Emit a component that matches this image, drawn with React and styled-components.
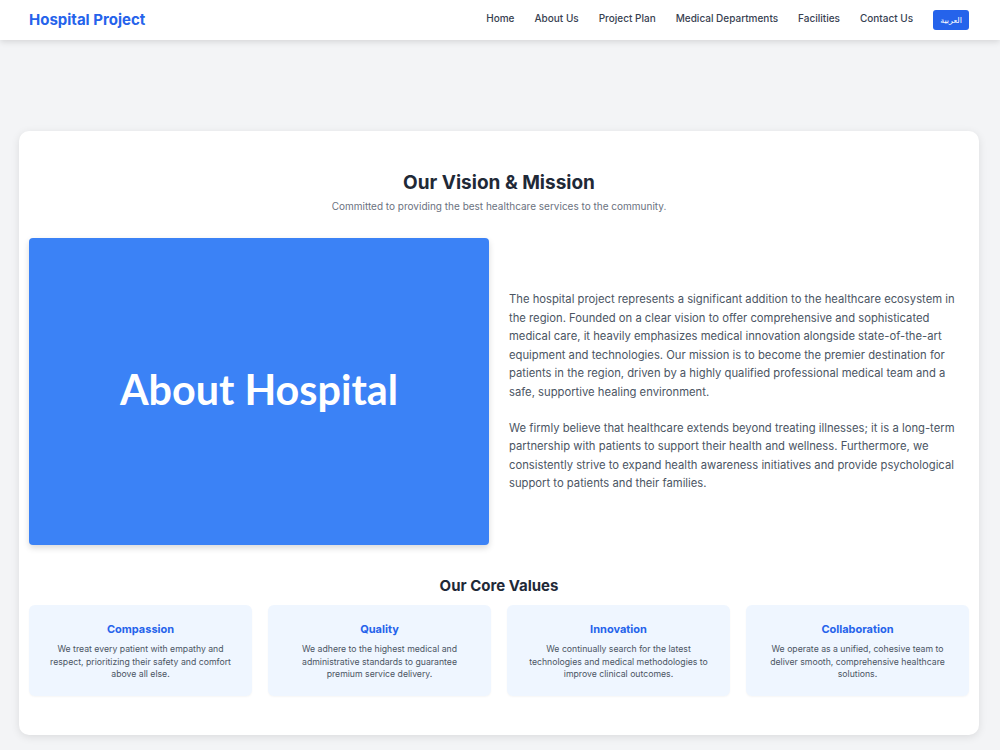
import styled, { createGlobalStyle } from "styled-components";

const GlobalStyle = createGlobalStyle`
  * { box-sizing: border-box; }
  body {
    margin: 0;
    background: #f3f4f6;
    font-family: Inter, "Noto Sans", sans-serif;
    color: #1f2937;
  }
`;

const Header = styled.header`
  height: 40px;
  background: #fff;
  box-shadow: 0 2px 6px rgba(0, 0, 0, 0.12);
  display: flex;
  align-items: center;
  justify-content: space-between;
  padding: 0 31px 0 29px;
`;

const Logo = styled.div`
  font-size: 15px;
  font-weight: 700;
  color: #2563eb;
  margin-top: -2px;
`;

const Nav = styled.nav`
  display: flex;
  align-items: center;
  gap: 20px;
`;

const NavLink = styled.a`
  font-size: 10px;
  font-weight: 500;
  color: #374151;
  text-decoration: none;
  margin-top: -4px;
`;

const LangButton = styled.button`
  background: #2563eb;
  color: #fff;
  border: none;
  border-radius: 3px;
  height: 20px;
  padding: 0 7px;
  font-size: 8px;
  font-family: "Noto Sans", "DejaVu Sans", sans-serif;
  margin-top: -1px;
`;

const Main = styled.main`
  padding: 91px 21px 15px 19px;
`;

const Card = styled.section`
  background: #fff;
  border-radius: 10px;
  box-shadow: 0 2px 8px rgba(0, 0, 0, 0.1);
  padding: 40px 10px 39px;
`;

const Heading = styled.h2`
  margin: 0;
  text-align: center;
  font-size: 19px;
  font-weight: 700;
  color: #1f2937;
`;

const Subtitle = styled.p`
  margin: 6px 0 0;
  text-align: center;
  font-size: 10px;
  color: #6b7280;
`;

const Intro = styled.div`
  display: grid;
  grid-template-columns: 460px 1fr;
  gap: 20px;
  margin-top: 26px;
  align-items: center;
`;

const Banner = styled.div`
  height: 307px;
  background: #3b82f6;
  border-radius: 4px;
  box-shadow: 0 3px 6px rgba(0, 0, 0, 0.15);
  display: flex;
  align-items: center;
  justify-content: center;
  padding-bottom: 6px;
  color: #fff;
  font-family: Lato, sans-serif;
  font-weight: 700;
  font-size: 41.3px;
`;

const TextBlock = styled.div`
  font-size: 11.25px;
  line-height: 18.4px;
  color: #4b5563;
  padding-right: 4px;
`;

const Para = styled.p`
  margin: 0 0 18px;
  &:last-child { margin-bottom: 0; }
`;

const ValuesTitle = styled.h3`
  margin: 31px 0 0;
  text-align: center;
  font-size: 15px;
  font-weight: 700;
  color: #1f2937;
`;

const ValuesGrid = styled.div`
  display: grid;
  grid-template-columns: repeat(4, 1fr);
  gap: 16px;
  margin-top: 10px;
`;

const ValueCard = styled.div`
  background: #eff6ff;
  border-radius: 6px;
  height: 91px;
  padding: 17px 16px 0;
  text-align: center;
  box-shadow: 0 1px 2px rgba(0, 0, 0, 0.04);
`;

const ValueName = styled.div`
  font-size: 11px;
  font-weight: 700;
  color: #2563eb;
`;

const ValueText = styled.p`
  margin: 7px 0 0;
  font-size: 8.7px;
  line-height: 12.5px;
  color: #4b5563;
`;

const links = ["Home", "About Us", "Project Plan", "Medical Departments", "Facilities", "Contact Us"];

const values = [
  { name: "Compassion", text: "We treat every patient with empathy and respect, prioritizing their safety and comfort above all else." },
  { name: "Quality", text: "We adhere to the highest medical and administrative standards to guarantee premium service delivery." },
  { name: "Innovation", text: "We continually search for the latest technologies and medical methodologies to improve clinical outcomes." },
  { name: "Collaboration", text: "We operate as a unified, cohesive team to deliver smooth, comprehensive healthcare solutions." },
];

const App = () => {
  return (
    <>
      <GlobalStyle />
      <Header>
        <Logo>Hospital Project</Logo>
        <Nav>
          {links.map((l) => (
            <NavLink key={l} href="#">{l}</NavLink>
          ))}
          <LangButton>العربية</LangButton>
        </Nav>
      </Header>
      <Main>
        <Card>
          <Heading>Our Vision &amp; Mission</Heading>
          <Subtitle>Committed to providing the best healthcare services to the community.</Subtitle>
          <Intro>
            <Banner>About Hospital</Banner>
            <TextBlock>
              <Para>
                The hospital project represents a significant addition to the healthcare ecosystem in the region.
                Founded on a clear vision to offer comprehensive and sophisticated medical care, it heavily emphasizes
                medical innovation alongside state-of-the-art equipment and technologies. Our mission is to become the
                premier destination for patients in the region, driven by a highly qualified professional medical team
                and a safe, supportive healing environment.
              </Para>
              <Para>
                We firmly believe that healthcare extends beyond treating illnesses; it is a long-term partnership with
                patients to support their health and wellness. Furthermore, we consistently strive to expand health
                awareness initiatives and provide psychological support to patients and their families.
              </Para>
            </TextBlock>
          </Intro>
          <ValuesTitle>Our Core Values</ValuesTitle>
          <ValuesGrid>
            {values.map((v) => (
              <ValueCard key={v.name}>
                <ValueName>{v.name}</ValueName>
                <ValueText>{v.text}</ValueText>
              </ValueCard>
            ))}
          </ValuesGrid>
        </Card>
      </Main>
    </>
  );
};

export default App;
